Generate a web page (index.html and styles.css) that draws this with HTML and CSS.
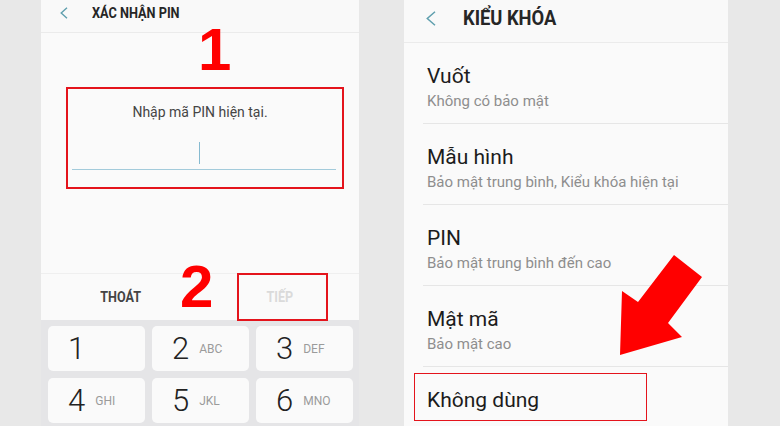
FILE: index.html
```html
<!DOCTYPE html>
<html lang="vi">
<head>
<meta charset="utf-8">
<title>PIN</title>
<link rel="stylesheet" href="styles.css">
</head>
<body>
<div class="page">
  <section class="phone left">
    <header class="bar bar-l">
      <svg class="back back-l" viewBox="0 0 8 12"><path d="M7 0.8 L1.2 6 L7 11.2" fill="none" stroke="#5f9fae" stroke-width="1.4"/></svg>
      <h1 class="title title-l">XÁC NHẬN PIN</h1>
    </header>
    <div class="content">
      <p class="prompt">Nhập mã PIN hiện tại.</p>
      <div class="field"><span class="cursor"></span></div>
    </div>
    <div class="actions">
      <span class="act"><span class="act-t">THOÁT</span></span>
      <span class="act dim"><span class="act-t">TIẾP</span></span>
    </div>
    <div class="keypad">
      <div class="key"><span class="dg">1</span></div>
      <div class="key"><span class="dg">2</span><span class="lt">ABC</span></div>
      <div class="key"><span class="dg">3</span><span class="lt">DEF</span></div>
      <div class="key"><span class="dg">4</span><span class="lt">GHI</span></div>
      <div class="key"><span class="dg">5</span><span class="lt">JKL</span></div>
      <div class="key"><span class="dg">6</span><span class="lt">MNO</span></div>
    </div>
    <div class="mark box1"></div>
    <div class="mark box2"></div>
    <div class="num n1">1</div>
    <div class="num n2">2</div>
  </section>

  <section class="phone right">
    <header class="bar bar-r">
      <svg class="back back-r" viewBox="0 0 10 15"><path d="M9 0.8 L1.3 7.5 L9 14.2" fill="none" stroke="#5f9fae" stroke-width="1.5"/></svg>
      <h1 class="title title-r">KIỂU KHÓA</h1>
    </header>
    <ul class="list">
      <li class="item"><div class="it">Vuốt</div><div class="is">Không có bảo mật</div></li>
      <li class="item"><div class="it">Mẫu hình</div><div class="is">Bảo mật trung bình, Kiểu khóa hiện tại</div></li>
      <li class="item"><div class="it">PIN</div><div class="is">Bảo mật trung bình đến cao</div></li>
      <li class="item"><div class="it">Mật mã</div><div class="is">Bảo mật cao</div></li>
      <li class="item"><div class="it">Không dùng</div></li>
    </ul>
    <div class="mark box3"></div>
  </section>

  <svg class="arrow" viewBox="0 0 780 426"><polygon points="674,255 702,277 668,323 682,337 620,355 622,291 638,302" fill="#ff0000"/></svg>
</div>
</body>
</html>
```

FILE: styles.css
```css
* { box-sizing: border-box; }
html, body { margin: 0; padding: 0; }
body { background: #e8e8e8; font-family: Roboto, "Noto Sans", sans-serif; }

.page {
  position: relative;
  display: flex;
  gap: 45px;
  height: 426px;
  width: 780px;
  padding-left: 41px;
  background: #e8e8e8;
  overflow: hidden;
}

.phone {
  position: relative;
  display: flex;
  flex-direction: column;
  height: 426px;
  background: #fafafa;
  overflow: hidden;
}
.left { width: 318px; }
.right { width: 324px; }

.bar {
  display: flex;
  align-items: flex-start;
  background: #f9f9f9;
  border-bottom: 1px solid #ebebeb;
  flex: none;
}
.bar-l { height: 33px; padding-left: 19px; }
.bar-r { height: 43px; padding-left: 22px; }

.back { display: block; flex: none; }
.back-l { width: 8px; height: 12px; margin-top: 7px; }
.back-r { width: 10px; height: 15px; margin-top: 11px; }

.title {
  margin: 0;
  font-weight: 700;
  color: #262626;
  white-space: nowrap;
  transform-origin: left center;
}
.title-l { font-size: 15.5px; line-height: 18px; margin: 4px 0 0 24px; transform: scaleX(0.82); }
.title-r { font-size: 19.5px; line-height: 22px; margin: 8px 0 0 27px; transform: scaleX(0.94); }

.content { height: 240px; padding-top: 69px; flex: none; }
.prompt {
  margin: 0;
  text-align: center;
  font-size: 14px;
  line-height: 20px;
  color: #454545;
}
.field {
  margin: 20px 0 0 31px;
  width: 264px;
  height: 28px;
  border-bottom: 1.5px solid #a3cbdb;
  display: flex;
  justify-content: center;
  padding-right: 9px;
}
.cursor { width: 1.5px; height: 22px; background: #86bad0; }

.actions {
  height: 47px;
  flex: none;
  display: grid;
  grid-template-columns: 1fr 1fr;
  border-top: 1px solid #efefef;
  background: #fafafa;
}
.act {
  display: flex;
  align-items: center;
  justify-content: center;
  font-size: 14px;
  font-weight: 700;
  color: #444;
}
.act-t { display: inline-block; transform: scaleX(0.9); }
.act.dim { color: #dadada; }

.keypad {
  flex: 1;
  background: #e5e5e7;
  padding: 6px 5px 0 7px;
  display: grid;
  grid-template-columns: repeat(3, 97px);
  grid-auto-rows: 45px;
  gap: 7px;
}
.key {
  background: #fafafa;
  border-radius: 5px;
  display: flex;
  align-items: center;
  padding-left: 20px;
  gap: 10px;
}
.dg { font-size: 31px; font-weight: 300; line-height: 1; color: #222; }
.lt { font-size: 12px; color: #9b9b9b; }

.list { list-style: none; margin: 0; padding: 0; }
.item {
  margin-left: 19px;
  padding: 19px 0 12px 4px;
  border-bottom: 1px solid #e6e6e6;
}
.it { font-size: 21px; line-height: 28px; color: #1c1c1c; }
.is { margin-top: 1px; font-size: 15px; line-height: 20px; color: #8e8e8e; }

.mark { position: absolute; border: 2px solid #e4141c; }
.box1 { left: 25px; top: 87px; width: 278px; height: 102px; }
.box2 { left: 196px; top: 273px; width: 91px; height: 48px; }
.box3 { left: 10px; top: 373px; width: 233px; height: 48px; border-width: 1.5px; }

.num {
  position: absolute;
  font-family: "Liberation Sans", Arial, sans-serif;
  font-weight: 700;
  font-size: 60px;
  line-height: 60px;
  color: #ff0000;
}
.n1 { left: 157px; top: 20px; }
.n2 { left: 139px; top: 257px; }

.arrow {
  position: absolute;
  left: 0;
  top: 0;
  width: 780px;
  height: 426px;
  pointer-events: none;
}
```
